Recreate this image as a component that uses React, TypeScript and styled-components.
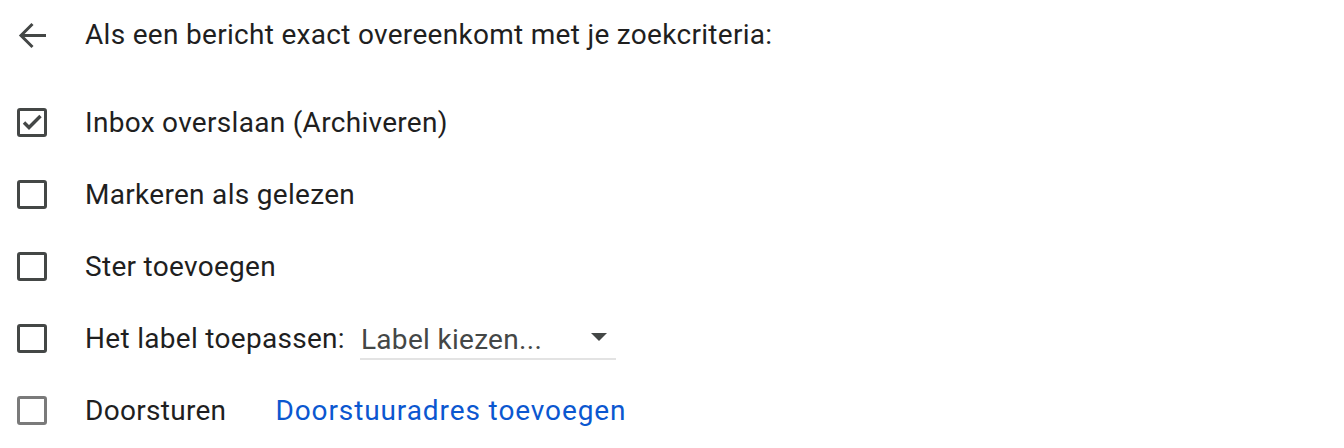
import { createGlobalStyle } from "styled-components"
import styled from "styled-components"

const GlobalStyle = createGlobalStyle`
  html, body {
    margin: 0;
    padding: 0;
    background: #fff;
  }
  body {
    font-family: Roboto, "Liberation Sans", Arial, sans-serif;
    color: #1f1f1f;
  }
`

const StyledPage = styled.div`
  width: 1344px;
  height: 448px;
  box-sizing: border-box;
  padding: 0 0 0 17px;
  display: flex;
  flex-direction: column;
`

const StyledHeader = styled.div`
  display: flex;
  align-items: center;
  height: 70px;
  gap: 38px;
`

const StyledBackButton = styled.button`
  width: 30px;
  height: 30px;
  padding: 0;
  border: none;
  background: none;
  display: flex;
  align-items: center;
  justify-content: center;
  cursor: pointer;
`

const StyledTitle = styled.div`
  font-size: 28px;
  letter-spacing: 0.3px;
  line-height: 34px;
`

const StyledList = styled.div`
  display: flex;
  flex-direction: column;
  padding-top: 16px;
`

const StyledRow = styled.label`
  display: flex;
  align-items: center;
  height: 72px;
  font-size: 28px;
  letter-spacing: 0.3px;
`

const StyledBox = styled.span<{ $disabled?: boolean }>`
  width: 30px;
  height: 29px;
  box-sizing: border-box;
  border: 3px solid ${(p) => (p.$disabled ? "#7a7a7a" : "#444746")};
  border-radius: 3px;
  display: flex;
  align-items: center;
  justify-content: center;
  flex-shrink: 0;
  margin-right: 38px;
`

const StyledText = styled.span`
  white-space: nowrap;
`

const StyledSelect = styled.div`
  margin-left: 15px;
  width: 256px;
  height: 40px;
  box-sizing: border-box;
  border-bottom: 2px solid #e3e3e3;
  display: flex;
  align-items: center;
  justify-content: space-between;
  padding: 0 9px 0 1px;
  margin-top: 4px;
  color: #444746;
`

const StyledCaret = styled.span`
  width: 0;
  height: 0;
  border-left: 8px solid transparent;
  border-right: 8px solid transparent;
  border-top: 8px solid #444746;
  margin-bottom: 4px;
`

const StyledLink = styled.a`
  margin-left: 49px;
  color: #0b57d0;
  letter-spacing: 0.9px;
  text-decoration: none;
  white-space: nowrap;
`

const Check = () => (
  <svg width="22" height="22" viewBox="0 0 22 22">
    <path d="M3 11.5l5 5L19.5 5" fill="none" stroke="#444746" strokeWidth="3.4" />
  </svg>
)

export default function App() {
  return (
    <>
      <GlobalStyle />
      <StyledPage>
        <StyledHeader>
          <StyledBackButton aria-label="Terug">
            <svg width="29" height="27" viewBox="0 0 29 27">
              <path
                d="M3 13.5H28M14.5 2L3 13.5 14.5 25"
                fill="none"
                stroke="#444746"
                strokeWidth="3"
              />
            </svg>
          </StyledBackButton>
          <StyledTitle>Als een bericht exact overeenkomt met je zoekcriteria:</StyledTitle>
        </StyledHeader>
        <StyledList>
          <StyledRow>
            <StyledBox>
              <Check />
            </StyledBox>
            <StyledText>Inbox overslaan (Archiveren)</StyledText>
          </StyledRow>
          <StyledRow>
            <StyledBox />
            <StyledText>Markeren als gelezen</StyledText>
          </StyledRow>
          <StyledRow>
            <StyledBox />
            <StyledText>Ster toevoegen</StyledText>
          </StyledRow>
          <StyledRow>
            <StyledBox />
            <StyledText>Het label toepassen:</StyledText>
            <StyledSelect>
              <span>Label kiezen...</span>
              <StyledCaret />
            </StyledSelect>
          </StyledRow>
          <StyledRow>
            <StyledBox $disabled />
            <StyledText>Doorsturen</StyledText>
            <StyledLink href="#">Doorstuuradres toevoegen</StyledLink>
          </StyledRow>
        </StyledList>
      </StyledPage>
    </>
  )
}
